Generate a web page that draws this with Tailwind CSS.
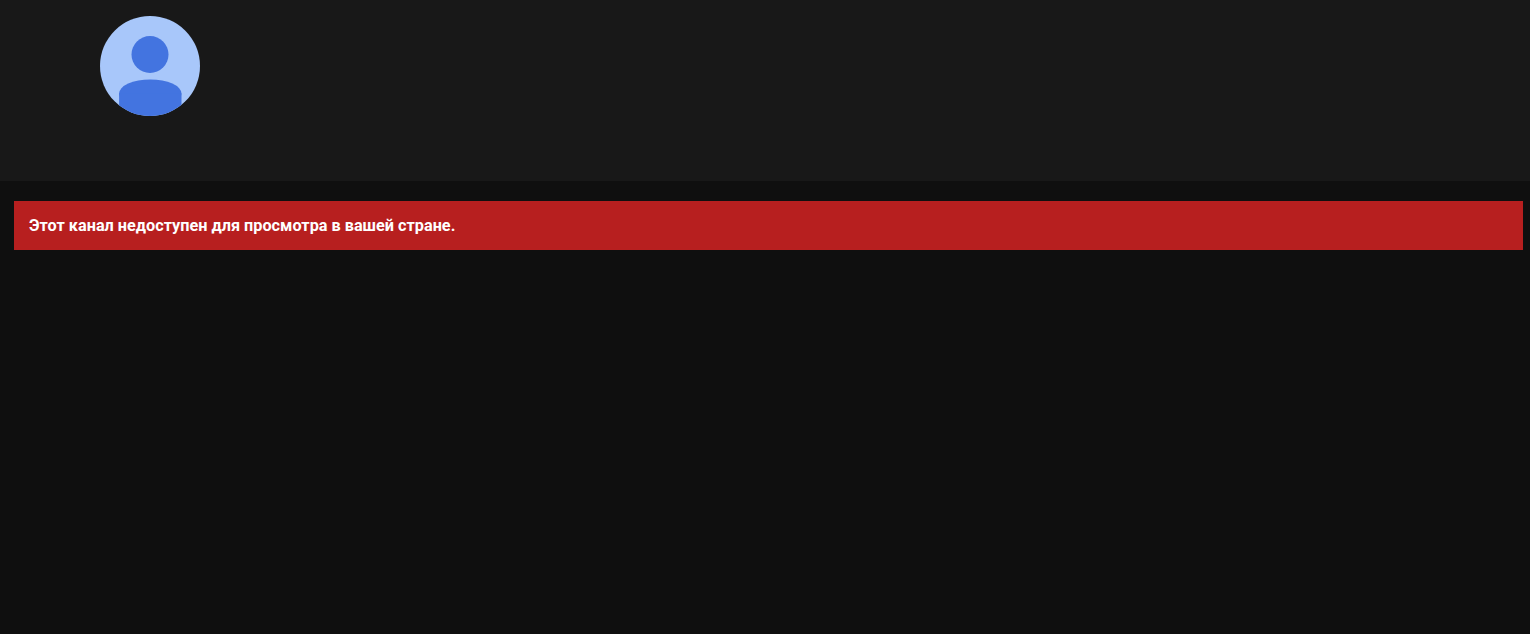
<!doctype html>
<html lang="ru">
<head>
<meta charset="utf-8">
<script src="https://cdn.jsdelivr.net/npm/@tailwindcss/browser@4"></script>
</head>
<body class="bg-[#0f0f0f] h-[634px] overflow-hidden font-['Roboto',sans-serif]">
<header class="h-[181px] bg-[#181818] pt-4 pl-[100px]">
<svg class="block size-[100px]" viewBox="0 0 100 100">
<defs><clipPath id="c"><circle cx="50" cy="50" r="50"/></clipPath></defs>
<g clip-path="url(#c)">
<rect width="100" height="100" fill="#a8c7fa"/>
<circle cx="50" cy="38.5" r="18.5" fill="#4374e0"/>
<ellipse cx="50.3" cy="77.5" rx="31.2" ry="14" fill="#4374e0"/>
<rect x="19.1" y="77.5" width="62.4" height="23" fill="#4374e0"/>
</g>
</svg>
</header>
<main class="pt-5 pl-[14px] pr-[7px]">
<div class="h-[49px] bg-[#b71f1f] flex items-center pt-px px-[15px] text-white text-[16.25px] font-bold">Этот канал недоступен для просмотра в вашей стране.</div>
</main>
</body>
</html>
